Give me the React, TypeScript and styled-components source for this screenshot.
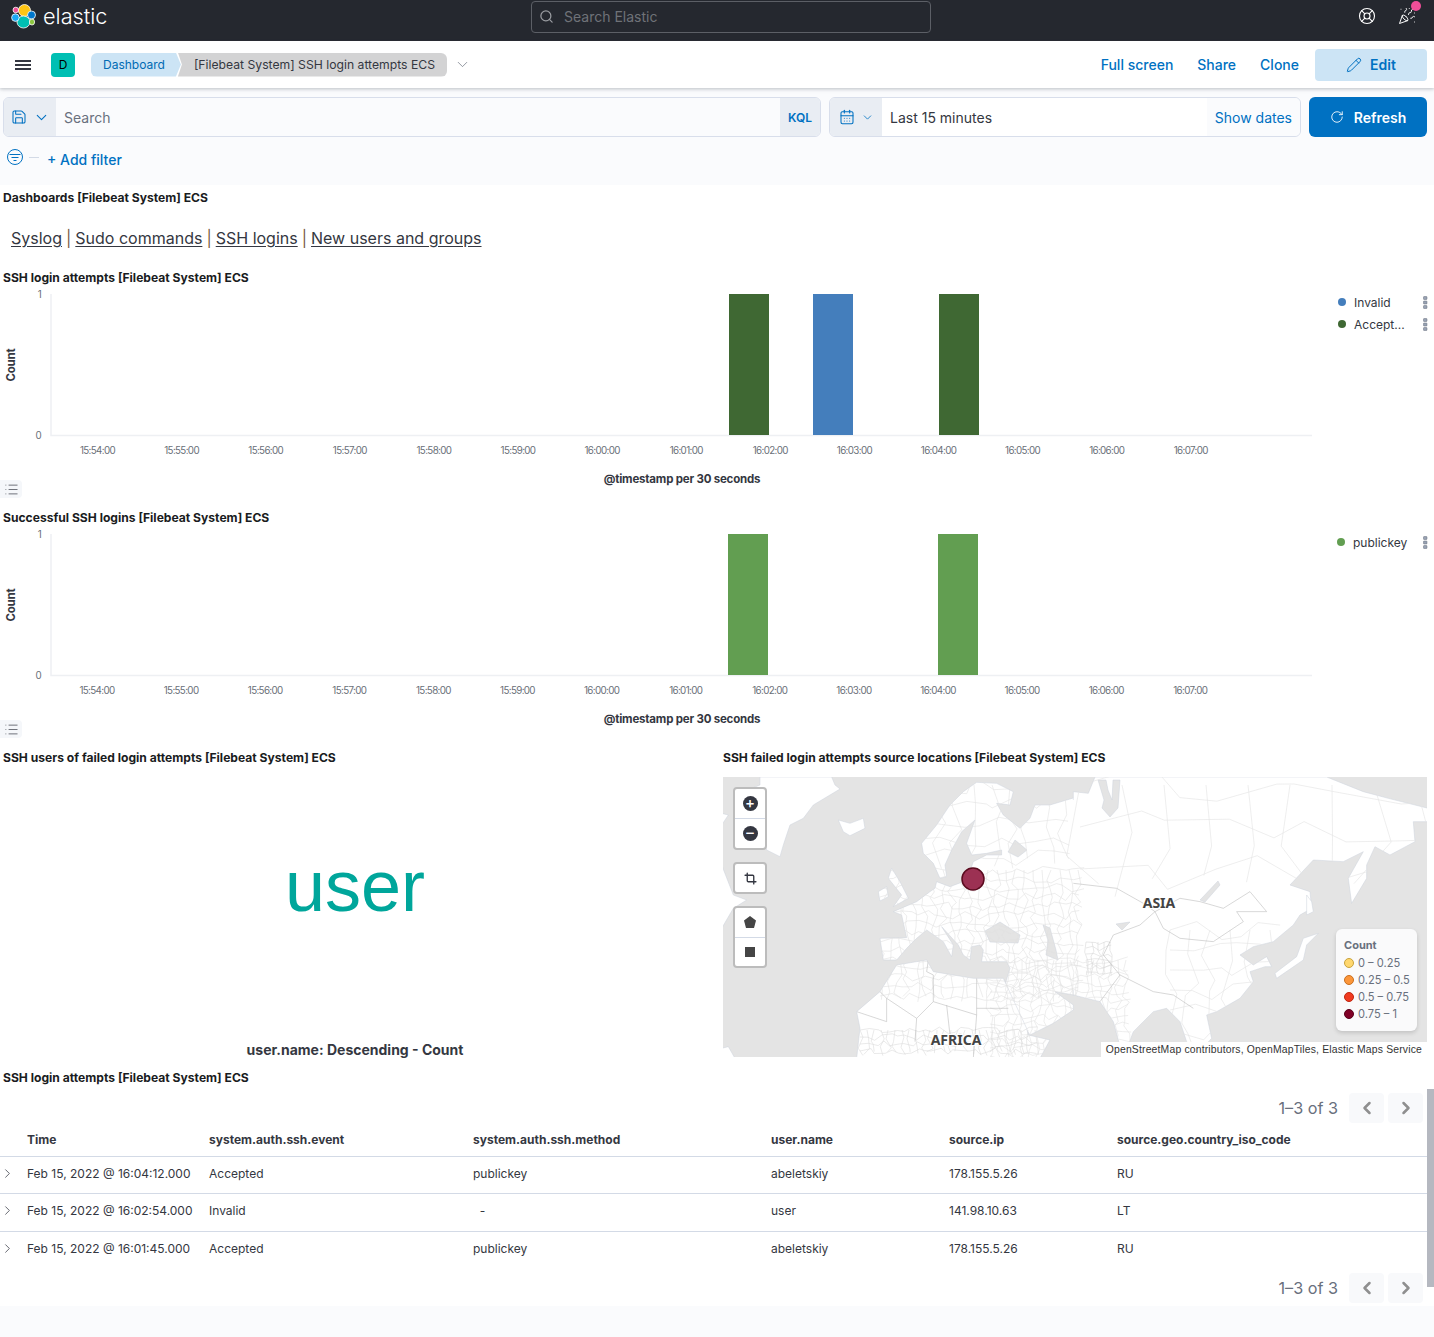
import styled, { createGlobalStyle } from 'styled-components';
import { CalendarDays, ChevronDown, ChevronLeft, ChevronRight, Crop, LifeBuoy, List, PartyPopper, Pencil, RotateCw, Save, Search } from 'lucide-react';

const Global = createGlobalStyle`
  html, body { margin: 0; padding: 0; background: #fff; }
  body { font-family: Inter, "Liberation Sans", sans-serif; color: #343741; }
  * { box-sizing: border-box; }
`;

const Page = styled.div`
  position: relative;
  width: 1434px;
  height: 1337px;
  overflow: hidden;
  display: flex;
  flex-direction: column;
`;

/* top chrome */
const TopBar = styled.header`
  height: 41px;
  flex: none;
  background: #25282f;
  display: grid;
  grid-template-columns: 531px 400px 1fr;
  color: #fff;
`;
const Brand = styled.div`
  display: flex;
  align-items: center;
  gap: 7px;
  padding: 0 0 9px 11px;
`;
const BrandName = styled.span`
  font-size: 21.7px;
  font-weight: 300;
  color: #fff;
`;
const GlobalSearch = styled.div`
  margin-top: 1px;
  height: 32px;
  border: 1px solid #5c5f66;
  border-radius: 4px;
  display: flex;
  align-items: center;
  gap: 10px;
  padding: 0 8px 1px 7px;
  font-size: 14px;
  color: #6f7278;
  svg { color: #9a9ca1; }
`;
const TopIcons = styled.div`
  display: flex;
  justify-content: flex-end;
  align-items: center;
  gap: 22px;
  padding: 0 18px 9px 0;
`;
const HelpIcon = styled(LifeBuoy)`
  color: #fff;
`;
const PopperWrap = styled.span`
  position: relative;
  display: block;
  width: 18px;
  height: 18px;
`;
const PinkDot = styled.span`
  position: absolute;
  right: -5px;
  top: -6px;
  width: 10px;
  height: 10px;
  border-radius: 50%;
  background: #f04e98;
`;

const NavBar = styled.nav`
  height: 47px;
  flex: none;
  background: #fff;
  display: flex;
  align-items: center;
  padding: 0 7px 0 15px;
  box-shadow: 0 1px 3px rgba(105, 112, 125, 0.3), 0 2px 4px rgba(105, 112, 125, 0.12);
  position: relative;
  z-index: 1;
`;
const Burger = styled.span`
  width: 16px;
  height: 10px;
  margin-right: 20px;
  border-top: 2px solid #343741;
  border-bottom: 2px solid #343741;
  position: relative;
  &::after {
    content: '';
    position: absolute;
    left: 0;
    right: 0;
    top: 2px;
    height: 2px;
    background: #343741;
  }
`;
const Avatar = styled.span`
  width: 24px;
  height: 24px;
  border-radius: 4px;
  background: #00bfb3;
  font-size: 12px;
  display: flex;
  align-items: center;
  justify-content: center;
  color: #000;
  margin-right: 16px;
`;
const Crumb = styled.span<{ $first?: boolean }>`
  height: 24px;
  display: flex;
  align-items: center;
  font-size: ${({ $first }) => ($first ? '12px' : '12.2px')};
  background: ${({ $first }) => ($first ? '#cce4f5' : '#d3d3d4')};
  color: ${({ $first }) => ($first ? '#006bb4' : '#343741')};
  border-radius: ${({ $first }) => ($first ? '6px 0 0 6px' : '0 6px 6px 0')};
  padding: ${({ $first }) => ($first ? '0 16px 0 12px' : '0 12px 0 16px')};
  margin-left: ${({ $first }) => ($first ? '0' : '-3px')};
  clip-path: ${({ $first }) =>
    $first
      ? 'polygon(0 0, calc(100% - 5px) 0, 100% 50%, calc(100% - 5px) 100%, 0 100%)'
      : 'polygon(0 0, 100% 0, 100% 100%, 0 100%, 4px 50%)'};
`;
const CrumbCaret = styled(ChevronDown)`
  margin-left: 7px;
  color: #69707d;
`;
const NavLinks = styled.div`
  margin-left: auto;
  display: flex;
  align-items: center;
  gap: 24px;
`;
const NavLink = styled.span`
  font-size: 14px;
  font-weight: 500;
  color: #0071c2;
`;
const EditButton = styled.span`
  width: 112px;
  height: 32px;
  margin-left: -8px;
  border-radius: 4px;
  background: #cce4f5;
  color: #0071c2;
  font-size: 14px;
  font-weight: 600;
  display: flex;
  align-items: center;
  justify-content: center;
  gap: 8px;
`;

/* query bar */
const QueryArea = styled.section`
  height: 97px;
  flex: none;
  background: #fafbfd;
  padding: 9px 7px 0 3px;
`;
const QueryRow = styled.div`
  display: grid;
  grid-template-columns: 818px 472px 118px;
  gap: 8px;
  height: 40px;
`;
const FieldGroup = styled.div`
  display: flex;
  border: 1px solid #d8deeb;
  border-radius: 6px;
  overflow: hidden;
  align-items: stretch;
`;
const Addon = styled.div<{ $width: number }>`
  flex: none;
  width: ${({ $width }) => $width}px;
  background: #e9edf3;
  color: #0071c2;
  display: flex;
  align-items: center;
  justify-content: center;
  gap: 6px;
  font-size: 12px;
  font-weight: 600;
`;
const FieldText = styled.div<{ $placeholder?: boolean; $white?: boolean }>`
  flex: 1;
  display: flex;
  align-items: center;
  padding: 0 8px;
  font-size: 14px;
  background: ${({ $white }) => ($white ? '#fff' : 'transparent')};
  color: ${({ $placeholder }) => ($placeholder ? '#69707d' : '#343741')};
`;
const ShowDates = styled.span`
  background: #fafbfd;
  align-self: stretch;
  display: flex;
  align-items: center;
  padding: 0 8px;
  font-size: 14px;
  color: #0071c2;
`;
const RefreshButton = styled.div`
  background: #0071c2;
  border-radius: 6px;
  color: #fff;
  font-size: 14px;
  font-weight: 600;
  display: flex;
  align-items: center;
  justify-content: center;
  gap: 10px;
`;
const FilterRow = styled.div`
  display: flex;
  align-items: center;
  margin-top: 12px;
  height: 22px;
  padding-left: 4px;
`;
const FilterIcon = styled.svg`
  margin-top: -6px;
`;
const FilterDash = styled.span`
  width: 10px;
  height: 1px;
  background: #d3dae6;
  margin: 0 8px 6px 6px;
`;
const AddFilter = styled.span`
  font-size: 14px;
  font-weight: 500;
  color: #0071c2;
  margin-bottom: 2px;
`;

/* panels */
const Panel = styled.section<{ $height: number }>`
  height: ${({ $height }) => $height}px;
  flex: none;
  position: relative;
  min-width: 0;
`;
const PanelTitle = styled.h3`
  margin: 0;
  height: 26px;
  padding-left: 3px;
  font-size: 12.1px;
  line-height: 26px;
  font-weight: 700;
  color: #1a1c21;
  white-space: nowrap;
`;
const LinkLine = styled.p`
  margin: 15px 0 0;
  padding-left: 11px;
  font-size: 16px;
  line-height: 24px;
  color: #343741;
  display: flex;
  gap: 4px;
`;
const DocLink = styled.a`
  color: #343741;
  text-decoration: underline;
  text-underline-offset: 2px;
`;
const LinkSep = styled.span`
  color: #7a5a44;
`;
const ChartRow = styled.div`
  display: grid;
  grid-template-columns: 1318px 1fr;
  height: 214px;
`;
const ChartSvg = styled.svg`
  display: block;
  overflow: visible;
`;
const TickLabel = styled.text<{ $anchor?: string }>`
  font-family: Inter, sans-serif;
  font-size: 9.8px;
  letter-spacing: -0.65px;
  fill: #6a6f78;
  text-anchor: ${({ $anchor }) => $anchor ?? 'middle'};
`;
const AxisTitle = styled.text`
  font-family: Inter, sans-serif;
  font-size: 11.5px;
  font-weight: 700;
  letter-spacing: -0.2px;
  fill: #343741;
  text-anchor: middle;
`;
const LegendToggle = styled.span`
  position: absolute;
  left: 0;
  bottom: 7px;
  width: 22px;
  height: 18px;
  border-radius: 0 4px 4px 0;
  background: #f5f7fa;
  color: #343741;
  display: flex;
  align-items: center;
  justify-content: center;
`;
const ChartLegend = styled.ul<{ $indent: number }>`
  list-style: none;
  margin: 0;
  padding: 0 6px 0 ${({ $indent }) => $indent}px;
`;
const LegendItem = styled.li`
  height: 22px;
  display: flex;
  align-items: center;
  font-size: 12px;
  color: #343741;
`;
const LegendDot = styled.span<{ $color: string }>`
  width: 8px;
  height: 8px;
  border-radius: 50%;
  margin-right: 8px;
  background: ${({ $color }) => $color};
`;
const MoreDots = styled.svg`
  margin-left: auto;
`;

const TwoCols = styled.div`
  display: grid;
  grid-template-columns: 720px 1fr;
  flex: none;
`;
const CloudBox = styled.div`
  height: 294px;
  display: flex;
  flex-direction: column;
  align-items: center;
  padding-right: 10px;
`;
const CloudWord = styled.div`
  margin-top: 71px;
  font-size: 72px;
  line-height: 88px;
  font-family: "Liberation Sans", Inter, sans-serif;
  color: #00a69b;
`;
const CloudCaption = styled.div`
  margin-top: auto;
  margin-bottom: 5px;
  font-size: 14px;
  font-weight: 700;
  line-height: 20px;
  color: #343741;
`;

/* map */
const MapBox = styled.div`
  position: relative;
  margin: 6px 7px 0 3px;
  height: 280px;
  overflow: hidden;
  background: #e4e4e4;
`;
const MapSvg = styled.svg`
  display: block;
`;
const MapLabel = styled.text`
  font-family: "Noto Sans", "Open Sans", sans-serif;
  font-size: 14px;
  font-weight: 700;
  fill: #444;
  stroke: #fff;
  stroke-width: 2px;
  paint-order: stroke;
  text-anchor: middle;
`;
const MapTools = styled.div`
  position: absolute;
  left: 10px;
  top: 10px;
  display: flex;
  flex-direction: column;
  gap: 12px;
`;
const ToolGroup = styled.div<{ $height: number }>`
  width: 34px;
  height: ${({ $height }) => $height}px;
  background: #fff;
  border: 2px solid #bcbcbc;
  border-radius: 4px;
  display: flex;
  flex-direction: column;
`;
const ToolButton = styled.div`
  flex: 1;
  display: flex;
  align-items: center;
  justify-content: center;
  color: #343741;
  & + & { border-top: 1px solid #d3dae6; }
`;
const RoundIcon = styled.span`
  width: 15px;
  height: 15px;
  border-radius: 50%;
  background: #343741;
  color: #fff;
  font-size: 15px;
  line-height: 14px;
  font-weight: 500;
  text-align: center;
`;
const Penta = styled.svg`
  display: block;
`;
const SquareShape = styled.span`
  width: 10px;
  height: 10px;
  background: #454545;
`;
const MapLegend = styled.div`
  position: absolute;
  right: 10px;
  bottom: 26px;
  width: 81px;
  height: 102px;
  padding: 10px 8px;
  background: #fafafb;
  border-radius: 6px;
  box-shadow: 0 2px 4px rgba(0, 0, 0, 0.15);
  font-size: 11.1px;
  color: #69707d;
`;
const MapLegendTitle = styled.div`
  font-weight: 700;
  line-height: 12px;
  font-size: 11px;
  margin-bottom: 3px;
`;
const MapLegendRow = styled.div`
  display: flex;
  align-items: center;
  gap: 4px;
  height: 17px;
  white-space: nowrap;
`;
const Swatch = styled.span<{ $fill: string; $edge: string }>`
  width: 10px;
  height: 10px;
  flex: none;
  border-radius: 50%;
  background: ${({ $fill }) => $fill};
  border: 1px solid ${({ $edge }) => $edge};
`;
const Attribution = styled.div`
  position: absolute;
  right: 0;
  bottom: 0;
  height: 15px;
  padding: 0 5px;
  background: #fff;
  font-family: "Liberation Sans", sans-serif;
  font-size: 10.4px;
  line-height: 15px;
  letter-spacing: 0.17px;
  color: #333;
  white-space: nowrap;
`;

/* table */
const Pager = styled.div<{ $gap: number }>`
  height: 32px;
  margin-top: ${({ $gap }) => $gap}px;
  display: flex;
  align-items: center;
  justify-content: flex-end;
  padding-right: 11px;
  gap: 4px;
`;
const PagerText = styled.span`
  font-size: 16.2px;
  color: #69707d;
  margin-right: 7px;
`;
const PagerButton = styled.span`
  width: 35px;
  height: 30px;
  border-radius: 4px;
  background: #f8f9fb;
  color: #8f8f8f;
  display: flex;
  align-items: center;
  justify-content: center;
`;
const TableGrid = styled.div`
  margin-right: 7px;
`;
const TableRow = styled.div<{ $head?: boolean; $last?: boolean }>`
  display: grid;
  grid-template-columns: 27px 182px 264px 298px 178px 168px 1fr;
  align-items: center;
  height: ${({ $head }) => ($head ? '33px' : '37.3px')};
  padding-bottom: ${({ $head }) => ($head ? '1px' : '3px')};
  border-bottom: ${({ $last }) => ($last ? 'none' : '1px solid #d3dae6')};
  font-size: 12px;
  font-weight: ${({ $head }) => ($head ? 700 : 400)};
  color: #343741;
  white-space: nowrap;
`;
const RowChevron = styled(ChevronRight)`
  color: #343741;
`;
const PageFoot = styled.div`
  flex: 1;
  background: #fafbfd;
`;
const ScrollThumb = styled.div`
  position: absolute;
  right: 0;
  top: 1089px;
  width: 7px;
  height: 198px;
  background: #b5b8c0;
`;

const Logo = () => (
  <svg width="25" height="25" viewBox="0 0 25 25">
    <circle cx="13.5" cy="6.5" r="6" fill="#fec514" stroke="#fff" strokeWidth=".8" />
    <ellipse cx="12.5" cy="18" rx="6.5" ry="6" fill="#00bfb3" stroke="#fff" strokeWidth=".8" />
    <ellipse cx="20.5" cy="11" rx="4" ry="4" fill="#0077cc" stroke="#fff" strokeWidth=".8" />
    <ellipse cx="21" cy="18" rx="2.6" ry="3" fill="#8cc63f" stroke="#fff" strokeWidth=".8" />
    <circle cx="4.8" cy="6" r="2.8" fill="#f04e98" stroke="#fff" strokeWidth=".8" />
    <circle cx="4.4" cy="13.6" r="3.8" fill="#1ba9f5" stroke="#fff" strokeWidth=".8" />
  </svg>
);

const FilterCircle = () => (
  <FilterIcon width="16" height="16" viewBox="0 0 16 16" fill="none" stroke="#0071c2">
    <circle cx="8" cy="8" r="7.5" />
    <path d="M2.5 5.5h11M4.5 8.500h7M6.500 11.500h3" />
  </FilterIcon>
);

const Dots = () => (
  <MoreDots width="5" height="13" viewBox="0 0 5 13" fill="#98a2b3" stroke="#69707d" strokeWidth=".5">
    <rect x=".5" y=".5" width="3.500" height="3" rx=".6" />
    <rect x=".5" y="5" width="3.500" height="3" rx=".6" />
    <rect x=".5" y="9.500" width="3.500" height="3" rx=".6" />
  </MoreDots>
);

const tickTimes = ['15:54:00', '15:55:00', '15:56:00', '15:57:00', '15:58:00', '15:59:00', '16:00:00', '16:01:00', '16:02:00', '16:03:00', '16:04:00', '16:05:00', '16:06:00', '16:07:00'];

type Bar = { x: number; color: string };

const TimeChart = ({ bars, shift }: { bars: Bar[]; shift: number }) => (
  <ChartSvg width="1318" height="214" viewBox="0 0 1318 214">
    <path d="M51 3V144.500H1312" fill="none" stroke="#eef0f3" strokeWidth="1.500" />
    {bars.map((bar) => (
      <rect key={bar.x} x={bar.x} y="3" width="40" height="141" fill={bar.color} />
    ))}
    <TickLabel $anchor="end" x="41" y="7">1</TickLabel>
    <TickLabel $anchor="end" x="41" y="147.500">0</TickLabel>
    {tickTimes.map((label, index) => (
      <TickLabel key={label} x={97.5 + shift + index * 84.1} y="162.500">{label}</TickLabel>
    ))}
    <AxisTitle transform="translate(15 74) rotate(-90)">Count</AxisTitle>
    <AxisTitle x="682" y="192">@timestamp per 30 seconds</AxisTitle>
  </ChartSvg>
);

/* seeded pseudo random so the province mesh stays the same on every load */
const rand = (seed: number) => {
  const value = Math.sin(seed * 127.1) * 43758.5453;
  return value - Math.floor(value);
};

const mesh = (x0: number, y0: number, x1: number, y1: number, step: number) => {
  let d = '';
  let seed = x0 + y0 * 3;
  for (let y = y0; y <= y1; y += step) {
    d += `M${x0} ${y}`;
    for (let x = x0 + step; x <= x1; x += step) {
      seed += 1;
      d += `L${(x + rand(seed) * step * 0.7).toFixed(1)} ${(y + (rand(seed + 9) - 0.5) * step).toFixed(1)}`;
    }
  }
  for (let x = x0; x <= x1; x += step) {
    d += `M${x} ${y0}`;
    for (let y = y0 + step; y <= y1; y += step) {
      seed += 1;
      d += `L${(x + (rand(seed + 4) - 0.5) * step).toFixed(1)} ${(y + rand(seed + 2) * step * 0.7).toFixed(1)}`;
    }
  }
  return d;
};

// land outlines are written in the 3x crop coordinates of each half of the map
const westLand = [
  '610,235 605,205 650,150 690,90 730,50 770,22 830,25 880,50 870,90 830,85 850,120 900,160 930,130 945,90 990,90 1040,75 1090,60 1090,665 1030,655 1005,650 1060,690 1060,705 1000,745 930,780 890,720 855,630 870,580 860,560 785,560 790,525 780,510 755,515 750,555 730,540 715,510 665,455 700,510 695,545 670,500 620,465 590,490 560,520 530,555 490,555 480,490 560,488 545,420 520,410 590,380 630,350 645,340 650,320 690,335 730,320 750,290 760,260 800,240 845,240 845,225 800,235 755,240 740,205 765,135 725,170 695,225 675,270 680,305 660,310 640,265',
  '530,570 620,555 640,590 760,610 850,610 920,760 925,780 990,795 960,850 410,850 420,760 410,710 480,650',
  '120,6 335,6 345,30 360,42 330,60 280,90 250,130 210,150 190,210 180,245 140,225 95,40 120,30',
  '515,280 540,320 565,370 520,395 545,360 505,310',
  '475,350 500,335 505,365 480,378',
  '355,135 390,145 430,130 435,160 390,182 370,170',
  '5,115 25,120 5,150',
  '5,270 40,360 80,375 40,400 5,460',
  '5,820 25,815 45,850 5,850',
];
const eastLand = [
  '-20,50 25,55 45,6 740,6 850,50 925,70 1045,100 1045,140 1000,140 1005,200 930,240 885,215 860,270 860,310 815,385 805,310 850,230 790,260 700,255 630,330 690,350 695,400 660,420 640,450 580,500 520,515 480,540 520,570 560,545 575,575 555,575 510,590 520,620 480,670 410,710 380,720 395,790 340,850 320,800 300,740 260,700 220,710 160,770 130,850 100,740 60,680 0,665 -20,660',
  '680,360 695,380 700,410 680,420',
  '715,475 680,510 670,555 590,610 585,595 650,545 670,490',
];

const MapDrawing = () => (
  <MapSvg width="704" height="280" viewBox="723 777 704 280">
    <defs>
      <clipPath id="land">
        {westLand.map((points) => (
          <polygon key={points} points={points} transform="translate(720 775) scale(.3333)" />
        ))}
        {eastLand.map((points) => (
          <polygon key={points} points={points} transform="translate(1080 775) scale(.3333)" />
        ))}
      </clipPath>
    </defs>
    <g fill="#fff" stroke="#ccd2dc" strokeWidth="1.500">
      <g transform="translate(720 775) scale(.3333)">
        {westLand.map((points) => <polygon key={points} points={points} />)}
      </g>
      <g transform="translate(1080 775) scale(.3333)">
        {eastLand.map((points) => <polygon key={points} points={points} />)}
      </g>
    </g>
    {/* hides the seam where the two land halves overlap */}
    <rect x="1068" y="800" width="24" height="190" fill="#fff" />
    <g fill="#e4e4e4" stroke="#ccd2dc" strokeWidth=".5">
      <polygon points="985,931 1000,922 1020,935 1018,943 990,942" />
      <polygon points="1043,925 1050,928 1056,950 1058,960 1046,955 1048,940" />
      <polygon points="1015,840 1027,850 1018,857 1008,852" />
      <polygon points="1098,780 1104,800 1102,808 1110,817 1118,808 1120,780 1113,780 1112,800 1108,790 1106,780" />
      <polygon points="1200,900 1218,881 1220,885 1205,902" />
      <polygon points="1116,924 1130,922 1122,930" />
    </g>
    <g fill="none" clipPath="url(#land)">
      <path d={mesh(880, 870, 1080, 1000, 9)} stroke="#e0e0e0" strokeWidth=".6" />
      <path d={mesh(990, 960, 1130, 1057, 8)} stroke="#e2e2e2" strokeWidth=".6" />
      <path d={mesh(860, 1030, 1040, 1057, 7)} stroke="#dcdcdc" strokeWidth=".6" />
      <path d={mesh(920, 785, 1080, 870, 18)} stroke="#e2e2e2" strokeWidth=".6" />
      <path d={mesh(1080, 785, 1427, 900, 42)} stroke="#e6e6e6" strokeWidth=".7" />
      <path d={mesh(1170, 930, 1270, 1057, 20)} stroke="#e6e6e6" strokeWidth=".7" />
      <path d={mesh(1086, 942, 1114, 975, 6)} stroke="#d8d8d8" strokeWidth=".6" />
      <g stroke="#bdbdbd" strokeWidth="1.800" transform="translate(1080 775) scale(.3333)">
        <path d="M-20 325L110 340L190 385L225 410L250 460L300 490L400 500L490 440L470 410L560 410L510 350L430 400L360 380L300 370L225 410" />
        <path d="M100 480L180 450L225 410M100 480L70 540L120 600L220 650L280 660L340 700" />
        <path d="M60 680L120 600" />
      </g>
      <g stroke="#bdbdbd" strokeWidth="1.800" transform="translate(720 775) scale(.3333)">
        <path d="M625 555L620 590L640 600L640 680L770 720L770 610M770 700H865M500 670L590 730L640 680M590 730L585 800M680 690L690 780M770 720L760 850" />
        <path d="M480 650L500 670L500 740L410 710" />
      </g>
    </g>
    <circle cx="973" cy="879" r="11" fill="#9c3153" stroke="#5a0a1e" strokeWidth="1.500" />
    <MapLabel x="1159" y="908">ASIA</MapLabel>
    <MapLabel x="956" y="1045">AFRICA</MapLabel>
  </MapSvg>
);

const rows = [
  ['Feb 15, 2022 @ 16:04:12.000', 'Accepted', 'publickey', 'abeletskiy', '178.155.5.26', 'RU'],
  ['Feb 15, 2022 @ 16:02:54.000', 'Invalid', '\u00a0\u00a0-', 'user', '141.98.10.63', 'LT'],
  ['Feb 15, 2022 @ 16:01:45.000', 'Accepted', 'publickey', 'abeletskiy', '178.155.5.26', 'RU'],
];

const legendRows = [
  ['0 – 0.25', '#ffd76e', '#c8a23c'],
  ['0.25 – 0.5', '#fc963a', '#c96f1e'],
  ['0.5 – 0.75', '#f03b20', '#c0250f'],
  ['0.75 – 1', '#800026', '#5a001a'],
];

const PagerBar = ({ gap }: { gap: number }) => (
  <Pager $gap={gap}>
    <PagerText>1–3 of 3</PagerText>
    <PagerButton><ChevronLeft size={20} strokeWidth={3} /></PagerButton>
    <PagerButton><ChevronRight size={20} strokeWidth={3} /></PagerButton>
  </Pager>
);

export default function App() {
  return (
    <Page>
      <Global />
      <TopBar>
        <Brand>
          <Logo />
          <BrandName>elastic</BrandName>
        </Brand>
        <GlobalSearch>
          <Search size={15} />
          Search Elastic
        </GlobalSearch>
        <TopIcons>
          <HelpIcon size={18} strokeWidth={1.5} />
          <PopperWrap>
            <PartyPopper size={18} strokeWidth={1.3} />
            <PinkDot />
          </PopperWrap>
        </TopIcons>
      </TopBar>

      <NavBar>
        <Burger />
        <Avatar>D</Avatar>
        <Crumb $first>Dashboard</Crumb>
        <Crumb>[Filebeat System] SSH login attempts ECS</Crumb>
        <CrumbCaret size={17} strokeWidth={1} />
        <NavLinks>
          <NavLink>Full screen</NavLink>
          <NavLink>Share</NavLink>
          <NavLink>Clone</NavLink>
          <EditButton>
            <Pencil size={16} strokeWidth={1.5} />
            Edit
          </EditButton>
        </NavLinks>
      </NavBar>

      <QueryArea>
        <QueryRow>
          <FieldGroup>
            <Addon $width={52}>
              <Save size={16} strokeWidth={1.6} />
              <ChevronDown size={17} strokeWidth={1.5} />
            </Addon>
            <FieldText $placeholder>Search</FieldText>
            <Addon $width={40}>KQL</Addon>
          </FieldGroup>
          <FieldGroup>
            <Addon $width={52}>
              <CalendarDays size={16} strokeWidth={1.6} />
              <ChevronDown size={13} strokeWidth={1.5} />
            </Addon>
            <FieldText $white>Last 15 minutes</FieldText>
            <ShowDates>Show dates</ShowDates>
          </FieldGroup>
          <RefreshButton>
            <RotateCw size={14} strokeWidth={1.5} />
            Refresh
          </RefreshButton>
        </QueryRow>
        <FilterRow>
          <FilterCircle />
          <FilterDash />
          <AddFilter>+ Add filter</AddFilter>
        </FilterRow>
      </QueryArea>

      <Panel $height={80}>
        <PanelTitle>Dashboards [Filebeat System] ECS</PanelTitle>
        <LinkLine>
          <DocLink>Syslog</DocLink>
          <LinkSep>|</LinkSep>
          <DocLink>Sudo commands</DocLink>
          <LinkSep>|</LinkSep>
          <DocLink>SSH logins</DocLink>
          <LinkSep>|</LinkSep>
          <DocLink>New users and groups</DocLink>
        </LinkLine>
      </Panel>

      <Panel $height={240}>
        <PanelTitle>SSH login attempts [Filebeat System] ECS</PanelTitle>
        <ChartRow>
          <TimeChart
            shift={0}
            bars={[
              { x: 729, color: '#3f6833' },
              { x: 813, color: '#447ebc' },
              { x: 939, color: '#3f6833' },
            ]}
          />
          <ChartLegend $indent={20}>
            <LegendItem><LegendDot $color="#447ebc" />Invalid<Dots /></LegendItem>
            <LegendItem><LegendDot $color="#3f6833" />Accept...<Dots /></LegendItem>
          </ChartLegend>
        </ChartRow>
        <LegendToggle><List size={15} strokeWidth={1.1} /></LegendToggle>
      </Panel>

      <Panel $height={240}>
        <PanelTitle>Successful SSH logins [Filebeat System] ECS</PanelTitle>
        <ChartRow>
          <TimeChart
            shift={-0.5}
            bars={[
              { x: 728, color: '#629e51' },
              { x: 938, color: '#629e51' },
            ]}
          />
          <ChartLegend $indent={19}>
            <LegendItem><LegendDot $color="#629e51" />publickey<Dots /></LegendItem>
          </ChartLegend>
        </ChartRow>
        <LegendToggle><List size={15} strokeWidth={1.1} /></LegendToggle>
      </Panel>

      <TwoCols>
        <Panel $height={320}>
          <PanelTitle>SSH users of failed login attempts [Filebeat System] ECS</PanelTitle>
          <CloudBox>
            <CloudWord>user</CloudWord>
            <CloudCaption>user.name: Descending - Count</CloudCaption>
          </CloudBox>
        </Panel>
        <Panel $height={320}>
          <PanelTitle>SSH failed login attempts source locations [Filebeat System] ECS</PanelTitle>
          <MapBox>
            <MapDrawing />
            <MapTools>
              <ToolGroup $height={63}>
                <ToolButton><RoundIcon>+</RoundIcon></ToolButton>
                <ToolButton><RoundIcon>–</RoundIcon></ToolButton>
              </ToolGroup>
              <ToolGroup $height={32}>
                <ToolButton><Crop size={13} strokeWidth={2.5} /></ToolButton>
              </ToolGroup>
              <ToolGroup $height={62}>
                <ToolButton>
                  <Penta width="12" height="12" viewBox="0 0 12 12"><polygon points="6,0 12,4.500 10,12 2,12 0,4.500" fill="#454545" /></Penta>
                </ToolButton>
                <ToolButton><SquareShape /></ToolButton>
              </ToolGroup>
            </MapTools>
            <MapLegend>
              <MapLegendTitle>Count</MapLegendTitle>
              {legendRows.map(([label, fill, edge]) => (
                <MapLegendRow key={label}>
                  <Swatch $fill={fill} $edge={edge} />
                  {label}
                </MapLegendRow>
              ))}
            </MapLegend>
            <Attribution>OpenStreetMap contributors, OpenMapTiles, Elastic Maps Service</Attribution>
          </MapBox>
        </Panel>
      </TwoCols>

      <Panel $height={241}>
        <PanelTitle>SSH login attempts [Filebeat System] ECS</PanelTitle>
        <PagerBar gap={1} />
        <TableGrid>
          <TableRow $head>
            <span />
            <span>Time</span>
            <span>system.auth.ssh.event</span>
            <span>system.auth.ssh.method</span>
            <span>user.name</span>
            <span>source.ip</span>
            <span>source.geo.country_iso_code</span>
          </TableRow>
          {rows.map((cells, index) => (
            <TableRow key={cells[0]} $last={index === rows.length - 1}>
              <RowChevron size={15} strokeWidth={1.2} />
              {cells.map((cell, cellIndex) => (
                <span key={cellIndex}>{cell}</span>
              ))}
            </TableRow>
          ))}
        </TableGrid>
        <PagerBar gap={3} />
      </Panel>

      <PageFoot />
      <ScrollThumb />
    </Page>
  );
}
